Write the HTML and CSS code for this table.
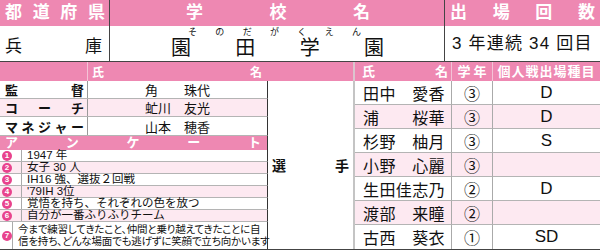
FILE: index.html
```html
<!DOCTYPE html>
<html lang="ja">
<head>
<meta charset="utf-8">
<title>園田学園</title>
<link rel="stylesheet" href="styles.css">
</head>
<body>
<div class="sheet">
  <div class="top">
    <div class="th pref spread"><span>都</span><span>道</span><span>府</span><span>県</span></div>
    <div class="th school spread"><span>学</span><span>校</span><span>名</span></div>
    <div class="th count spread"><span>出</span><span>場</span><span>回</span><span>数</span></div>
    <div class="td pref-val spread"><span>兵</span><span>庫</span></div>
    <div class="td school-val">
      <div class="ruby spread"><span>そ</span><span>の</span><span>だ</span><span>が</span><span>く</span><span>え</span><span>ん</span></div>
      <div class="sname spread"><span>園</span><span>田</span><span>学</span><span>園</span></div>
    </div>
    <div class="td count-val">3 年連続 34 回目</div>
  </div>

  <div class="bottom">
    <div class="staff">
      <div class="shead">
        <div class="shead-label"></div>
        <div class="shead-name spread"><span>氏</span><span>名</span></div>
      </div>
      <div class="srow">
        <div class="label spread"><span>監</span><span>督</span></div>
        <div class="person"><div class="person-in spread"><span>角</span><span>珠代</span></div></div>
      </div>
      <div class="srow alt">
        <div class="label spread"><span>コ</span><span>ー</span><span>チ</span></div>
        <div class="person"><div class="person-in spread"><span>虻川</span><span>友光</span></div></div>
      </div>
      <div class="srow tall">
        <div class="label spread"><span>マ</span><span>ネ</span><span>ジ</span><span>ャ</span><span>ー</span></div>
        <div class="person"><div class="person-in spread"><span>山本</span><span>穂香</span></div></div>
      </div>
      <div class="qhead spread"><span>ア</span><span>ン</span><span>ケ</span><span>ー</span><span>ト</span></div>
      <div class="qrow">
        <div class="qnum"><span class="dot">1</span></div>
        <div class="qtext">1947 年</div>
      </div>
      <div class="qrow alt">
        <div class="qnum"><span class="dot">2</span></div>
        <div class="qtext">女子 30 人</div>
      </div>
      <div class="qrow">
        <div class="qnum"><span class="dot">3</span></div>
        <div class="qtext">IH16 強、選抜２回戦</div>
      </div>
      <div class="qrow alt">
        <div class="qnum"><span class="dot">4</span></div>
        <div class="qtext">'79IH 3位</div>
      </div>
      <div class="qrow">
        <div class="qnum"><span class="dot">5</span></div>
        <div class="qtext">覚悟を持ち、それぞれの色を放つ</div>
      </div>
      <div class="qrow alt">
        <div class="qnum"><span class="dot">6</span></div>
        <div class="qtext">自分が一番ふりふりチーム</div>
      </div>
      <div class="qrow last">
        <div class="qnum"><span class="dot">7</span></div>
        <div class="qtext long">今まで練習してきたこと、仲間と乗り越えてきたことに自<br>信を持ち、どんな場面でも逃げずに笑顔で立ち向かいます</div>
      </div>
    </div>

    <div class="players">
      <div class="ph ph-blank"></div>
      <div class="ph ph-name spread"><span>氏</span><span>名</span></div>
      <div class="ph ph-grade">学年</div>
      <div class="ph ph-event">個人戦出場種目</div>

      <div class="senshu spread"><span>選</span><span>手</span></div>

      <div class="pn"><div class="pn-in spread"><span>田中</span><span>愛香</span></div></div>
      <div class="pg">③</div>
      <div class="pe">D</div>

      <div class="pn alt"><div class="pn-in spread"><span>浦</span><span>桜華</span></div></div>
      <div class="pg alt">③</div>
      <div class="pe alt">D</div>

      <div class="pn"><div class="pn-in spread"><span>杉野</span><span>柚月</span></div></div>
      <div class="pg">③</div>
      <div class="pe">S</div>

      <div class="pn alt"><div class="pn-in spread"><span>小野</span><span>心麗</span></div></div>
      <div class="pg alt">③</div>
      <div class="pe alt"></div>

      <div class="pn"><div class="pn-in spread"><span>生田佳志乃</span></div></div>
      <div class="pg">②</div>
      <div class="pe">D</div>

      <div class="pn alt"><div class="pn-in spread"><span>渡部</span><span>来瞳</span></div></div>
      <div class="pg alt">②</div>
      <div class="pe alt"></div>

      <div class="pn last"><div class="pn-in spread"><span>古西</span><span>葵衣</span></div></div>
      <div class="pg last">①</div>
      <div class="pe last">SD</div>
    </div>
  </div>
</div>
</body>
</html>
```

FILE: styles.css
```css
* {
  box-sizing: border-box;
  margin: 0;
  padding: 0;
}

body {
  margin: 0;
  width: 600px;
  height: 252px;
  overflow: hidden;
  background: #fff;
  color: #111;
  font-family: "Liberation Sans", "Noto Sans CJK JP", sans-serif;
}

.sheet {
  width: 600px;
}

.spread {
  display: flex;
  justify-content: space-between;
  align-items: center;
}

/* ---------- top block ---------- */
.top {
  display: grid;
  grid-template-columns: 110px 335px 155px;
  grid-template-rows: 26px 35px;
  border-bottom: 1px solid #444;
}

.th {
  background: #ee88b2;
  color: #fff;
  font-weight: bold;
  font-size: 17px;
  line-height: 26px;
}

.pref,
.school,
.pref-val,
.school-val {
  border-right: 1px solid #444;
}

.th.pref {
  padding: 0 4px 0 5px;
}

.th.school {
  padding: 0 74px 0 76px;
}

.th.count {
  padding: 0 5px 0 5px;
}

.td {
  background: #fff;
}

.pref-val {
  padding: 2px 7px 0 5px;
  font-size: 17px;
}

.school-val {
  padding-top: 1px;
}

.ruby {
  margin-left: 78px;
  width: 173px;
  font-size: 9px;
  line-height: 10px;
}

.sname {
  margin-left: 61px;
  width: 213px;
  font-size: 20px;
  line-height: 22px;
}

.count-val {
  padding-left: 7px;
  font-size: 17px;
  line-height: 35px;
  letter-spacing: 1.2px;
  white-space: nowrap;
}

/* ---------- bottom block ---------- */
.bottom {
  display: flex;
  height: 188px;
  border-bottom: 1px solid #444;
}

.staff {
  width: 268px;
  display: flex;
  flex-direction: column;
}

.shead {
  display: flex;
  height: 19px;
  background: #ee88b2;
  color: #fff;
  font-weight: bold;
  font-size: 12px;
}

.shead-label {
  width: 88px;
  border-right: 1px solid #f4c3d7;
}

.shead-name {
  flex: 1;
  padding: 0 6px 0 4px;
}

.srow {
  display: flex;
  height: 18px;
  border-bottom: 1px solid #b4b4b4;
  border-right: 1px solid #333;
  font-size: 13px;
}

.srow.tall {
  height: 19px;
}

.alt {
  background: #fde9f1;
}

.label {
  width: 88px;
  border-right: 1px solid #999;
  padding: 0 3px 0 5px;
  font-weight: bold;
}

.person {
  flex: 1;
  padding-left: 57px;
  display: flex;
  align-items: center;
}

.person-in {
  width: 65px;
}

.qhead {
  height: 14px;
  background: #ee88b2;
  color: #fff;
  font-weight: bold;
  font-size: 13px;
  line-height: 14px;
  padding: 0 6px 0 5px;
  border-right: 1px solid #333;
  overflow: hidden;
}

.qrow {
  display: flex;
  height: 12px;
  border-bottom: 1px solid #b4b4b4;
  border-right: 1px solid #333;
}

.qrow.last {
  height: 27px;
  border-bottom: none;
}

.qnum {
  width: 22px;
  border-right: 1px solid #aaa;
  display: flex;
  align-items: center;
  padding-left: 2px;
}

.dot {
  width: 10px;
  height: 10px;
  border-radius: 50%;
  background: #e8438d;
  color: #fff;
  font-size: 8px;
  font-weight: bold;
  line-height: 10px;
  text-align: center;
}

.qtext {
  padding-left: 5px;
  font-size: 11.5px;
  line-height: 11px;
  display: flex;
  align-items: center;
  white-space: nowrap;
}

.qtext.long {
  display: block;
  padding-top: 1px;
  font-size: 10.5px;
  line-height: 12px;
  font-feature-settings: "palt";
  letter-spacing: -0.2px;
}

/* ---------- players ---------- */
.players {
  width: 332px;
  display: grid;
  grid-template-columns: 87px 97px 41px 107px;
  grid-template-rows: 19px repeat(7, 24px);
}

.ph {
  background: #ee88b2;
  color: #fff;
  font-weight: bold;
  font-size: 13px;
  line-height: 19px;
}

.ph-blank {
  border-right: 2px solid #dcc4ce;
}

.ph-name {
  padding: 0 3px 0 7px;
  border-right: 1px solid #f4c3d7;
}

.ph-grade {
  text-align: center;
  letter-spacing: 3px;
  padding-left: 3px;
  border-right: 1px solid #f4c3d7;
}

.ph-event {
  text-align: center;
  letter-spacing: 1px;
}

.senshu {
  grid-row: 2 / span 7;
  grid-column: 1;
  border-right: 2px solid #c4c4c4;
  padding: 0 4px 0 4px;
  font-size: 14px;
  font-weight: bold;
}

.pn,
.pg,
.pe {
  border-bottom: 1px solid #b4b4b4;
  display: flex;
  align-items: center;
}

.pn.last,
.pg.last,
.pe.last {
  border-bottom: none;
}

.pn {
  padding-left: 8px;
  border-right: 1px solid #aaa;
  font-size: 16px;
}

.pn-in {
  width: 82px;
  letter-spacing: 0.4px;
}

.pg {
  justify-content: center;
  border-right: 1px solid #aaa;
  font-size: 16px;
}

.pe {
  justify-content: center;
  font-size: 17px;
}
```
